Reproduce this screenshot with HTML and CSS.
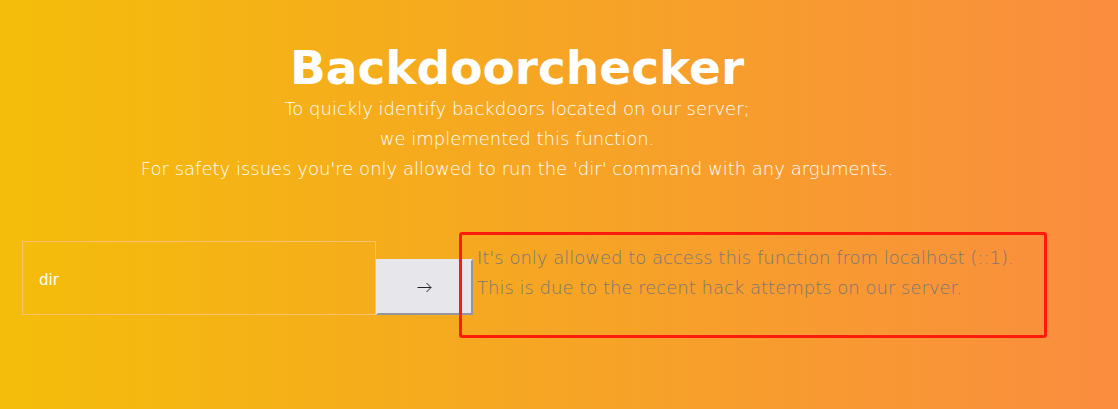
FILE: index.html
```html
<!DOCTYPE html>
<html lang="en">
<head>
<meta charset="utf-8">
<title>Backdoorchecker</title>
<link rel="stylesheet" href="styles.css">
</head>
<body>
<header class="intro">
<h1 class="title">Backdoorchecker</h1>
<p class="lead">To quickly identify backdoors located on our server;<br>we implemented this function.<br>For safety issues you're only allowed to run the 'dir' command with any arguments.</p>
</header>
<form class="checker">
<input class="command" type="text" value="dir" aria-label="Command">
<button class="run" type="button" aria-label="Run"><svg class="arrow" viewBox="0 0 16 12" aria-hidden="true"><path d="M0.500 6.500H14M9.500 2L14 6.500L9.500 11"/></svg></button>
<p class="notice" role="status">It's only allowed to access this function from localhost (::1).<br>This is due to the recent hack attempts on our server.</p>
</form>
</body>
</html>
```
FILE: styles.css
```css
* {
  box-sizing: border-box;
}

body {
  margin: 0;
  min-height: 100vh;
  padding: 41px 71px 71px 22px;
  background: linear-gradient(90deg, #f4bd0a 0%, #f6a524 50%, #fa8d3f 100%);
  font-family: "DejaVu Sans", sans-serif;
  color: #fff;
}

.intro {
  padding-right: 35px;
  text-align: center;
}

.title {
  margin: 0;
  font-size: 47px;
  line-height: 53px;
}

.lead,
.notice {
  margin: 0;
  font-size: 18px;
  font-weight: 200;
  line-height: 30px;
}

.checker {
  display: flex;
  align-items: flex-start;
  margin-top: 57px;
}

.command {
  width: 354px;
  height: 74px;
  padding: 4px 16px 0;
  border: 1px solid #f8c270;
  background: transparent;
  color: #fff;
  font: 15px "DejaVu Sans", sans-serif;
}

.run {
  display: grid;
  place-items: center;
  width: 97px;
  height: 56px;
  margin-top: 18px;
  border: 2px solid;
  border-color: #e7e6eb #95959c #95959c #e7e6eb;
  background: #e7e6eb;
}

.arrow {
  width: 16px;
  height: 12px;
  fill: none;
  stroke: #222;
}

.notice {
  flex: 1;
  margin: -9px 0 0 -14px;
  padding: 8px 15px 32px;
  border: 3px solid #ff1b0c;
  border-radius: 3px;
  color: #777777;
}
```
